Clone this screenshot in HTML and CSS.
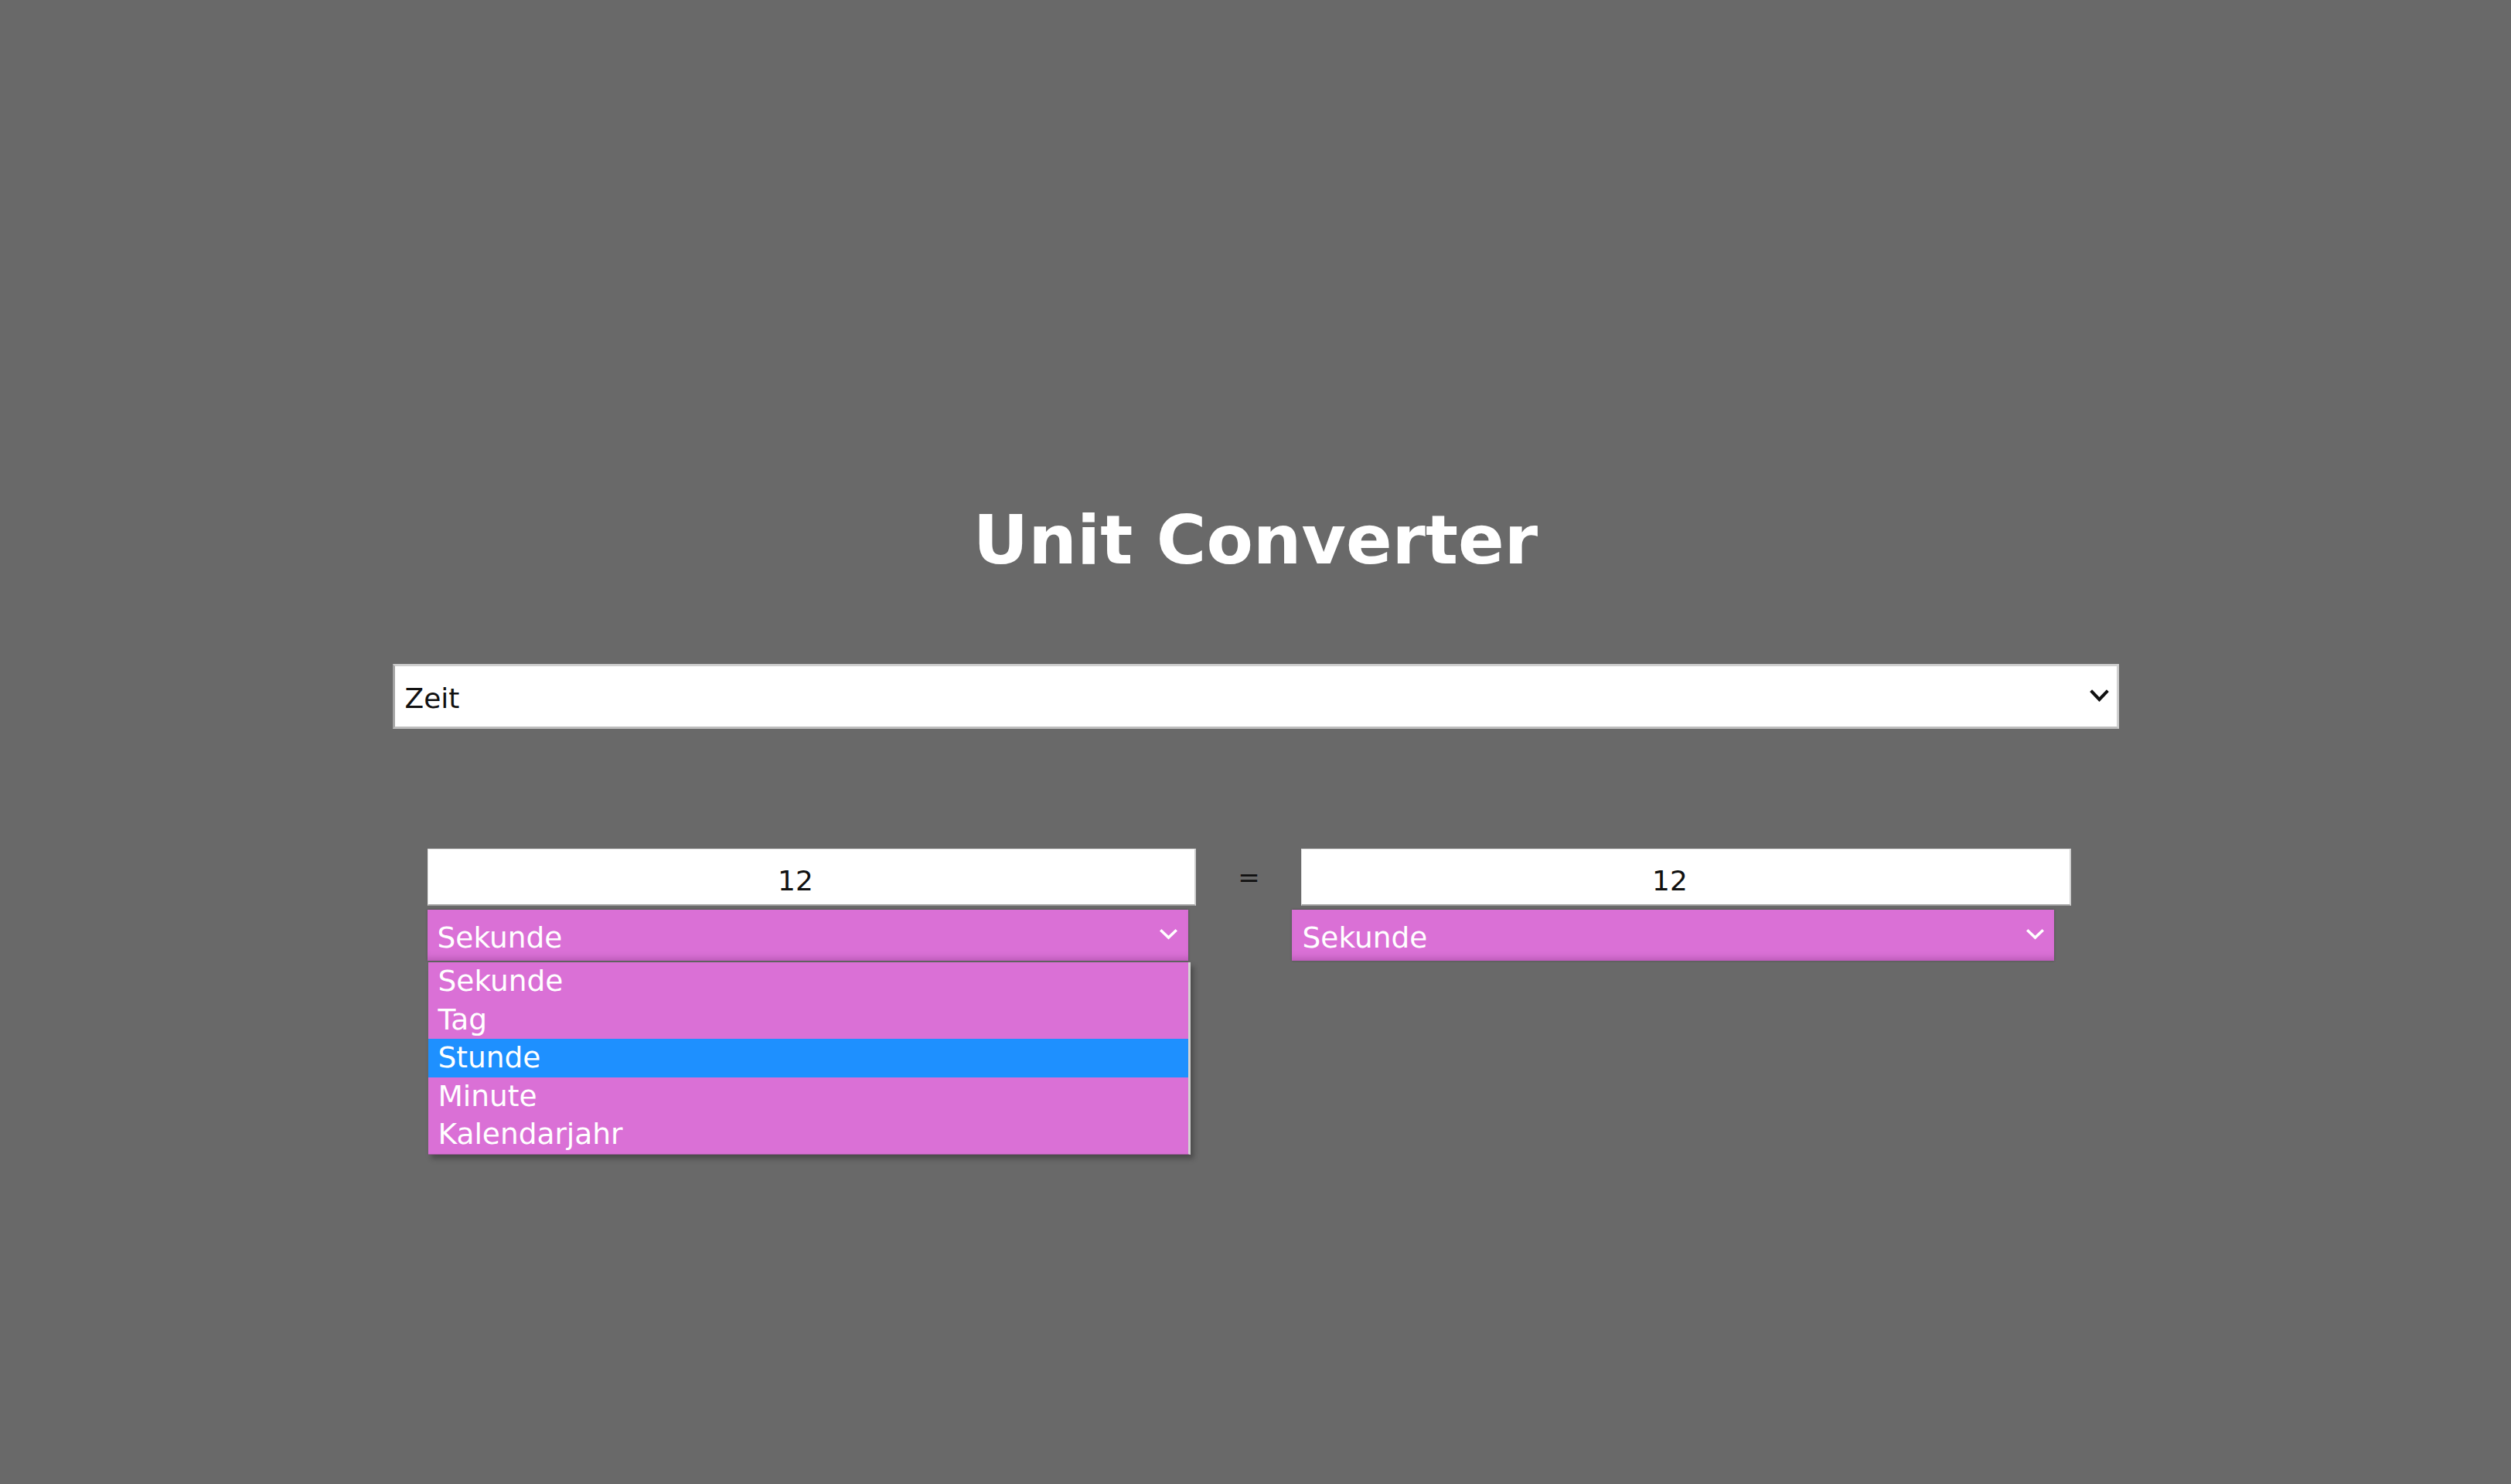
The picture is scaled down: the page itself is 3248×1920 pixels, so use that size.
FILE: index.html
```html
<!DOCTYPE html>
<html lang="de">
<head>
<meta charset="utf-8">
<title>Unit Converter</title>
<link rel="stylesheet" href="styles.css">
</head>
<body>
<main class="app">
  <h1 class="title">Unit Converter</h1>
  <div class="category">
    <span>Zeit</span>
    <svg class="chev chev-dark" viewBox="0 0 25 17"><path d="M3 3 L12.5 13 L22 3"/></svg>
  </div>
  <div class="converter">
    <div class="col col-left">
      <input class="num" type="text" value="12">
      <div class="unit">
        <span>Sekunde</span>
        <svg class="chev chev-light" viewBox="0 0 23 14"><path d="M2.5 2.5 L11.5 11 L20.5 2.5"/></svg>
        <ul class="menu">
          <li>Sekunde</li>
          <li>Tag</li>
          <li class="sel">Stunde</li>
          <li>Minute</li>
          <li>Kalendarjahr</li>
        </ul>
      </div>
    </div>
    <div class="eq">=</div>
    <div class="col col-right">
      <input class="num" type="text" value="12">
      <div class="unit">
        <span>Sekunde</span>
        <svg class="chev chev-light" viewBox="0 0 23 14"><path d="M2.5 2.5 L11.5 11 L20.5 2.5"/></svg>
      </div>
    </div>
  </div>
</main>
</body>
</html>
```
FILE: styles.css
```css
html, body {
  margin: 0;
  padding: 0;
}
body {
  background: #696969;
  font-family: "DejaVu Sans", Verdana, sans-serif;
  min-height: 1920px;
}
.app {
  padding-top: 655px;
}
.title {
  margin: 0;
  font-size: 88px;
  line-height: 88px;
  font-weight: bold;
  color: #fff;
  text-align: center;
}
.category {
  box-sizing: border-box;
  width: 2233px;
  height: 84px;
  margin: 116px auto 0;
  background: #fff;
  border: 3px solid #cfcfcf;
  border-left-color: #a4a4a4;
  border-bottom-color: #bdbdbd;
  display: flex;
  align-items: center;
  justify-content: space-between;
  padding: 4px 10px 0 13px;
  font-size: 36px;
  color: #111;
}
.chev {
  fill: none;
  stroke-linecap: square;
  flex: none;
}
.chev-dark {
  width: 25px;
  height: 17px;
  stroke: #111;
  stroke-width: 4;
  margin-top: -6px;
}
.chev-light {
  width: 23px;
  height: 14px;
  stroke: #fff;
  stroke-width: 3.5;
  margin-top: -8px;
}
.converter {
  box-sizing: border-box;
  width: 2233px;
  margin: 155px auto 0;
  padding-left: 45px;
  display: flex;
  align-items: flex-start;
}
.col {
  display: flex;
  flex-direction: column;
  align-items: flex-start;
  gap: 5px;
}
.col-left {
  width: 994px;
}
.num {
  box-sizing: border-box;
  width: 994px;
  height: 74px;
  margin: 0;
  padding: 10px 40px 0 0;
  background: #fff;
  border: 1px solid #e2e2e2;
  border-right: 2px solid #d0d0d0;
  border-bottom: 2px solid #9c9c9c;
  font-family: "DejaVu Sans", Verdana, sans-serif;
  font-size: 36px;
  color: #111;
  text-align: center;
  outline: none;
}
.col-right .num {
  margin-left: 12px;
  width: 996px;
}
.eq {
  box-sizing: border-box;
  width: 124px;
  padding-left: 14px;
  height: 74px;
  line-height: 74px;
  text-align: center;
  font-size: 34px;
  color: #111;
}
.unit {
  position: relative;
  box-sizing: border-box;
  width: 984px;
  height: 66px;
  padding: 6px 14px 0 13px;
  background: #da70d6;
  color: #fff;
  font-size: 37.5px;
  display: flex;
  align-items: center;
  justify-content: space-between;
  box-shadow: inset 0 -9px 10px -6px rgba(60, 0, 60, 0.22), 0 0 3px rgba(0, 0, 0, 0.25);
}
.col-right .unit {
  width: 986px;
  padding-left: 14px;
  padding-right: 13px;
}
.menu {
  position: absolute;
  top: calc(100% + 2px);
  left: 1px;
  box-sizing: border-box;
  width: 986px;
  margin: 0;
  padding: 0;
  list-style: none;
  background: #da70d6;
  border-right: 3px solid #d2d2d2;
  border-bottom: 1px solid #9a5a98;
  box-shadow: 4px 5px 7px rgba(0, 0, 0, 0.3);
  z-index: 10;
}
.menu li {
  height: 49.6px;
  line-height: 49.6px;
  padding-left: 13px;
  color: #fff;
  font-size: 37.5px;
}
.menu li.sel {
  background: #1e90ff;
}
```
